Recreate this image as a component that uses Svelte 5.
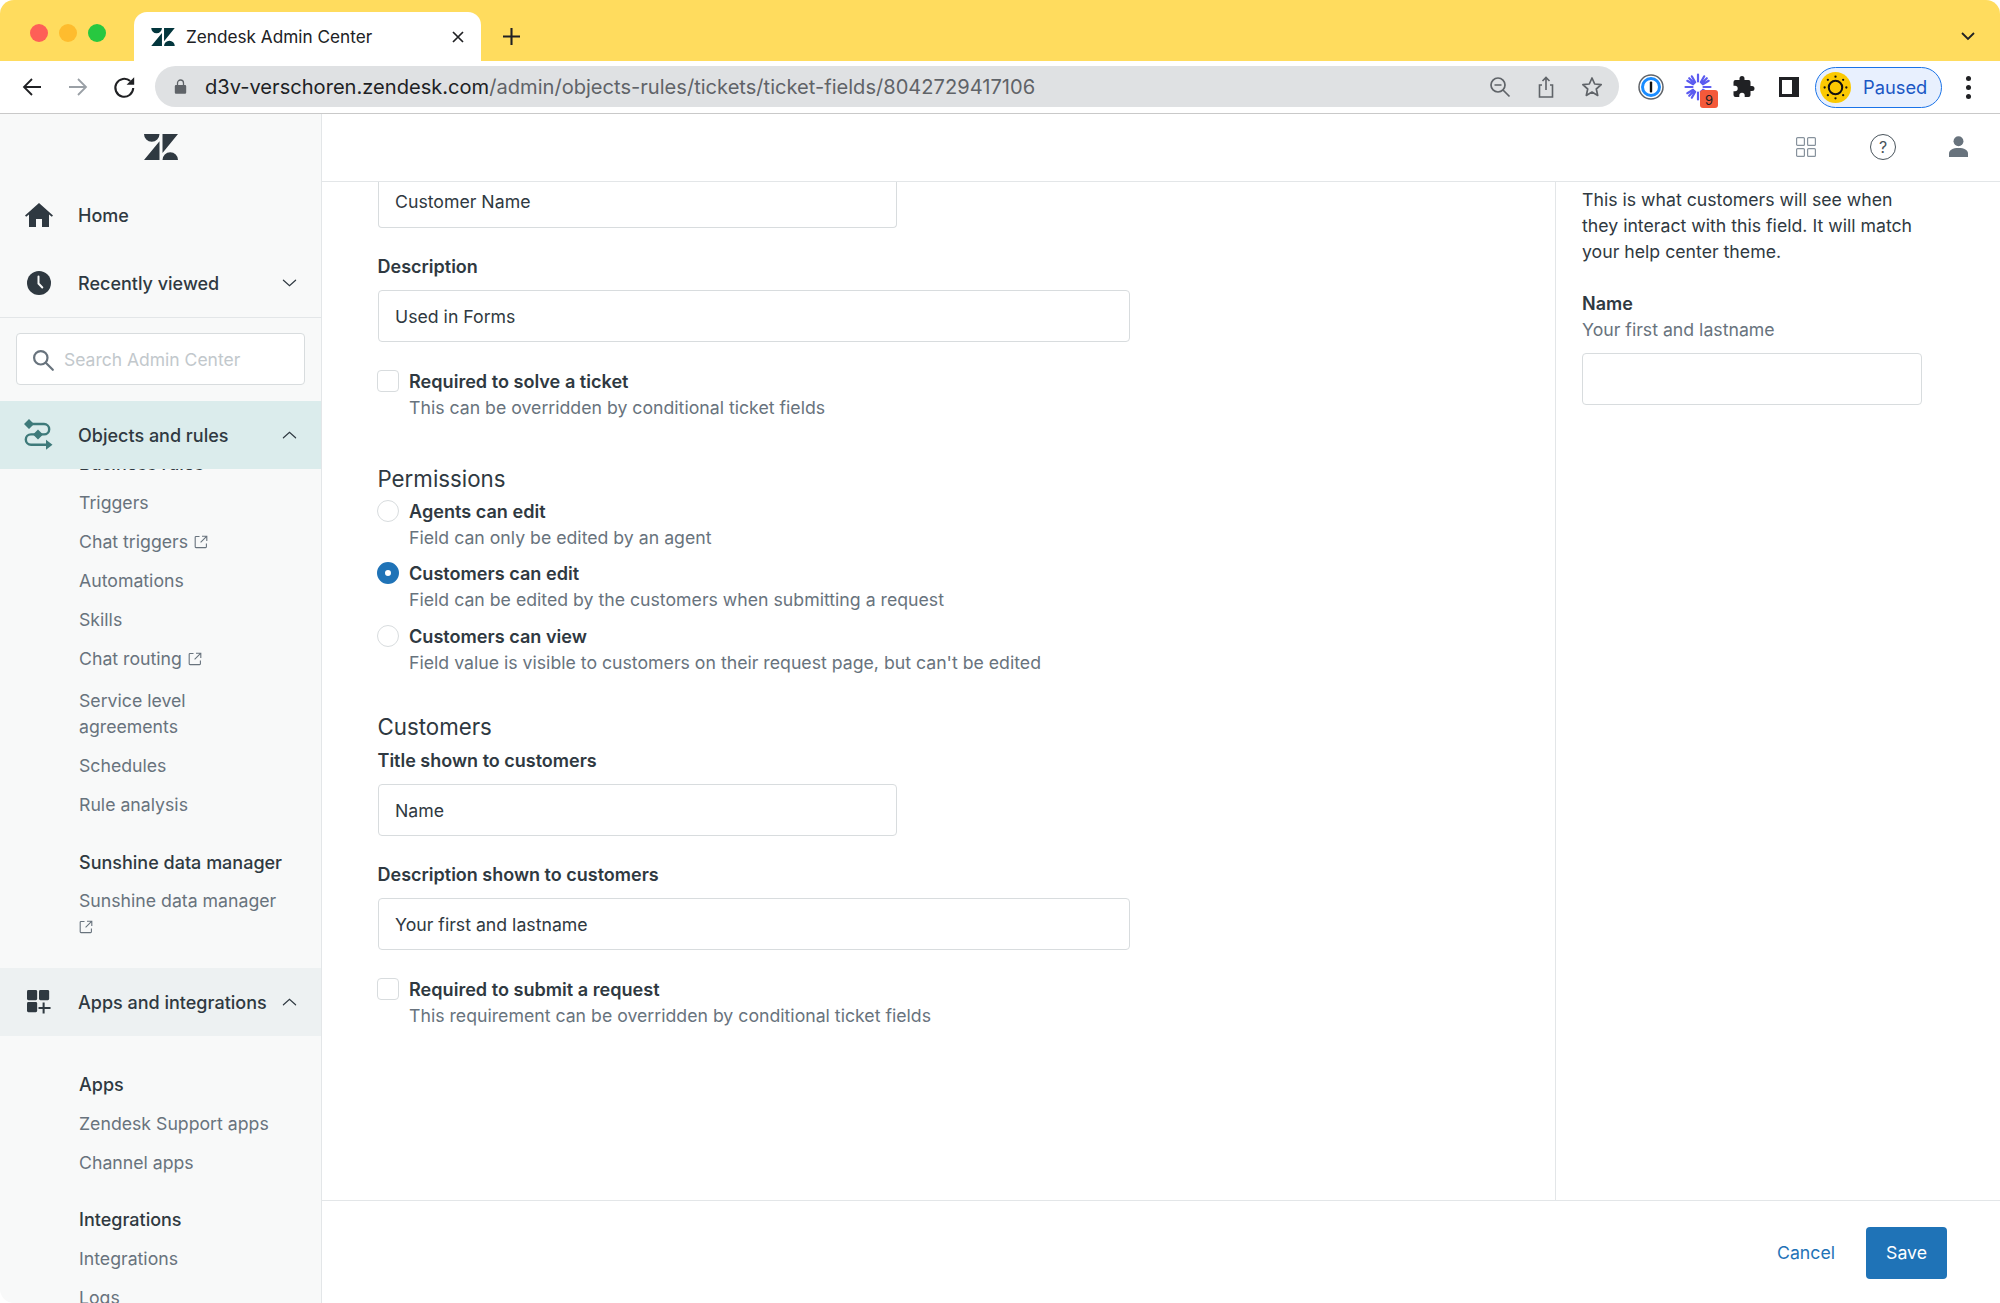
<script>
	const rulesItems = [
		{ label: 'Triggers' },
		{ label: 'Chat triggers', ext: true },
		{ label: 'Automations' },
		{ label: 'Skills' },
		{ label: 'Chat routing', ext: true },
		{ label: 'Service level agreements', narrow: true },
		{ label: 'Schedules' },
		{ label: 'Rule analysis' }
	];

	const permissions = [
		{ title: 'Agents can edit', hint: 'Field can only be edited by an agent', on: false },
		{ title: 'Customers can edit', hint: 'Field can be edited by the customers when submitting a request', on: true },
		{ title: 'Customers can view', hint: "Field value is visible to customers on their request page, but can't be edited", on: false }
	];
</script>

{#snippet zendeskMark()}
	<path d="M15.5 7.2V26H0zM15.5 0A7.75 7.75 0 0 1 0 0zM18.5 26a7.75 7.75 0 0 1 15.5 0zM18.5 19V0H34z" />
{/snippet}

{#snippet extIcon()}
	<svg class="ext" viewBox="0 0 14 14" fill="none" stroke="currentColor" stroke-width="1.1">
		<path d="M5.5 1.5H2A.8.8 0 0 0 1.2 2.3v9.5a.8.8 0 0 0 .8.8h9.6a.8.8 0 0 0 .8-.8V8.5M8 1.2h4.8V6M12.6 1.4 6.6 7.4" />
	</svg>
{/snippet}

{#snippet chevron(up)}
	<svg class="chev" viewBox="0 0 16 10" fill="none" stroke="#2f3941" stroke-width="1.3" stroke-linecap="round">
		<path d={up ? 'M1.5 8 8 2.2 14.5 8' : 'M1.5 2 8 7.8 14.5 2'} />
	</svg>
{/snippet}

<div class="window">
	<header class="tabstrip">
		<div class="lights">
			<span class="light red"></span>
			<span class="light amber"></span>
			<span class="light green"></span>
		</div>
		<div class="tab">
			<svg class="tab-logo" viewBox="0 0 34 26" fill="#03363d">{@render zendeskMark()}</svg>
			<span class="tab-title">Zendesk Admin Center</span>
			<svg class="tab-close" viewBox="0 0 12 12" stroke="#202124" stroke-width="1.7"><path d="M1 1l10 10M11 1 1 11" /></svg>
		</div>
		<svg class="tab-new" viewBox="0 0 18 18" stroke="#202124" stroke-width="2.2"><path d="M9 0v18M0 9h18" /></svg>
		<svg class="tab-list" viewBox="0 0 14 9" fill="none" stroke="#202124" stroke-width="1.8"><path d="M1 1l6 6 6-6" /></svg>
	</header>

	<div class="toolbar">
		<svg class="nav-ico" viewBox="0 0 20 20" fill="none" stroke="#202124" stroke-width="1.8"><path d="M19 10H2M10 2 2 10l8 8" /></svg>
		<svg class="nav-ico" viewBox="0 0 20 20" fill="none" stroke="#9aa0a6" stroke-width="1.8"><path d="M1 10h17M10 2l8 8-8 8" /></svg>
		<svg class="nav-ico reload" viewBox="0 0 20 20" fill="none" stroke="#202124" stroke-width="1.8"><path d="M17.6 10.5A7.8 7.8 0 1 1 15 4.4" /><path d="M18.4 1v6.6h-6.6z" fill="#202124" stroke="none" /></svg>
		<div class="omnibox">
			<svg class="lock" viewBox="0 0 12 15" fill="#5f6368"><path d="M1.5 6h9a1.2 1.2 0 0 1 1.2 1.2v6.3a1.2 1.2 0 0 1-1.2 1.2h-9a1.2 1.2 0 0 1-1.2-1.2V7.2A1.2 1.2 0 0 1 1.5 6z" /><path d="M3 6.5V4a3 3 0 0 1 6 0v2.5" fill="none" stroke="#5f6368" stroke-width="1.3" /></svg>
			<span class="url"><span class="host">d3v-verschoren.zendesk.com</span>/admin/objects-rules/tickets/ticket-fields/8042729417106</span>
			<svg class="omni-ico" viewBox="0 0 22 22" fill="none" stroke="#5f6368" stroke-width="1.7"><circle cx="9" cy="9" r="7" /><path d="M14 14l6.5 6.5M5.5 9h7" /></svg>
			<svg class="omni-ico" viewBox="0 0 22 22" fill="none" stroke="#5f6368" stroke-width="1.6"><path d="M7 9H4.500v12h13V9H15M11 14V2M7.500 5 11 1.500 14.500 5" /></svg>
			<svg class="omni-ico" viewBox="0 0 22 22" fill="none" stroke="#5f6368" stroke-width="1.7" stroke-linejoin="round"><path d="m11 2 2.700 6 6.500.7-4.900 4.300 1.400 6.400L11 16.100 5.300 19.400l1.400-6.400L1.800 8.700 8.300 8z" /></svg>
		</div>
		<div class="extensions">
			<svg class="ext-op" viewBox="0 0 26 26"><circle cx="13" cy="13" r="12" fill="#fff" stroke="#5f6368" stroke-width="1.5" /><circle cx="13" cy="13" r="8.5" fill="none" stroke="#1a8cff" stroke-width="3" /><rect x="11.8" y="7.5" width="2.4" height="11" rx="1" fill="#111" /></svg>
			<div class="ext-linear">
				<svg viewBox="0 0 28 28" stroke="#5b5bf0" stroke-width="2.2" stroke-linecap="round">
					<path d="M14 1.500v7M14 19.500v7M1.500 14h7M19.500 14h7M5.200 5.200l5 5M17.800 17.800l5 5M22.800 5.200l-5 5M10.200 17.800l-5 5M7.800 3.300l3.400 5.900M16.800 18.800l3.400 5.900M3.300 20.200l5.900-3.400M18.800 11.200l5.900-3.400M20.200 3.300l-3.400 5.900M11.200 18.800l-3.400 5.900M3.300 7.800l5.900 3.400M18.800 16.800l5.900 3.400" />
				</svg>
				<span class="ext-badge">9</span>
			</div>
			<svg class="ext-puzzle" viewBox="0 0 24 24" fill="#202124"><path d="M20 11h-1.500V7a2 2 0 0 0-2-2h-4V3.500a2.500 2.500 0 0 0-5 0V5H3.500a2 2 0 0 0-2 2v3.800H3a2.700 2.700 0 0 1 0 5.400H1.500V20a2 2 0 0 0 2 2h3.800v-1.500a2.700 2.700 0 0 1 5.400 0V22h3.800a2 2 0 0 0 2-2v-4H20a2.500 2.500 0 0 0 0-5z" /></svg>
			<svg class="ext-side" viewBox="0 0 20 20"><path d="M0 0h20v20H0z" fill="#202124" /><path d="M3 3h10v14H3z" fill="#fff" /></svg>
		</div>
		<div class="profile">
			<svg class="avatar" viewBox="0 0 30 30">
				<circle cx="15" cy="15" r="15" fill="#fbc902" />
				<circle cx="15" cy="15" r="6.5" fill="none" stroke="#111" stroke-width="2" />
				<g fill="#111"><circle cx="15" cy="4.5" r="1.1" /><circle cx="15" cy="25.5" r="1.1" /><circle cx="4.5" cy="15" r="1.1" /><circle cx="25.5" cy="15" r="1.1" /><circle cx="7.6" cy="7.6" r="1.1" /><circle cx="22.4" cy="7.6" r="1.1" /><circle cx="7.6" cy="22.4" r="1.1" /><circle cx="22.4" cy="22.4" r="1.1" /></g>
			</svg>
			<span>Paused</span>
		</div>
		<div class="kebab"><i></i><i></i><i></i></div>
	</div>

	<div class="app">
		<aside class="sidebar">
			<div class="brand">
				<svg viewBox="0 0 34 26" fill="#2f3941">{@render zendeskMark()}</svg>
			</div>
			<div class="nav-row">
				<svg class="nav-glyph" viewBox="0 0 28 24" fill="#2f3941"><path d="M14 0 0 12.500l1.200 1.300L4 11.400V24h7v-8h6v8h7V11.400l2.800 2.400 1.200-1.300z" /></svg>
				<span>Home</span>
			</div>
			<div class="nav-row">
				<svg class="nav-glyph" viewBox="0 0 24 24"><circle cx="12" cy="12" r="12" fill="#2f3941" /><path d="M11.500 5.500v7l3.800 4" fill="none" stroke="#f8f9f9" stroke-width="2" stroke-linecap="round" /></svg>
				<span>Recently viewed</span>
				{@render chevron(false)}
			</div>
			<div class="search">
				<div class="search-box">
					<svg viewBox="0 0 22 22" fill="none" stroke="#68737d" stroke-width="2.2"><circle cx="8.8" cy="8.8" r="6.7" /><path d="m13.800 13.800 7 7" stroke-linecap="round" /></svg>
					<span>Search Admin Center</span>
				</div>
			</div>
			<div class="nav-row band active">
				<svg class="nav-glyph wide" viewBox="0 0 30 32" fill="none" stroke="#3e7a7a" stroke-width="2.4">
					<path d="M6 5H21a5.200 5.200 0 0 1 0 10.400H8a5.200 5.200 0 0 0 0 10.400H25" />
					<path d="m6 0 5 5-5 5-5-5zM15 10.400l5 5-5 5-5-5zM23 20.800l6.500 5-6.500 5z" fill="#3e7a7a" stroke="none" />
				</svg>
				<span>Objects and rules</span>
				{@render chevron(true)}
			</div>
			<div class="subnav-clip">
				<div class="subnav rules">
					<div class="sub-title">Business rules</div>
					{#each rulesItems as item}
						<div class="sub-item" class:narrow={item.narrow}>
							{item.label}{#if item.ext}{@render extIcon()}{/if}
						</div>
					{/each}
					<div class="sub-title spaced">Sunshine data manager</div>
					<div class="sub-item wrapped">Sunshine data manager {@render extIcon()}</div>
				</div>
			</div>
			<div class="nav-row band muted">
				<svg class="nav-glyph" viewBox="0 0 26 26" fill="#2f3941">
					<rect x="0" y="0" width="11" height="11" rx="1.5" /><rect x="13" y="0" width="11" height="11" rx="1.5" /><rect x="0" y="13" width="11" height="11" rx="1.5" />
					<path d="M18 13.500v12M12.500 19.500h13" stroke="#2f3941" stroke-width="2.2" />
				</svg>
				<span>Apps and integrations</span>
				{@render chevron(true)}
			</div>
			<div class="subnav apps">
				<div class="sub-title">Apps</div>
				<div class="sub-item">Zendesk Support apps</div>
				<div class="sub-item">Channel apps</div>
				<div class="sub-title spaced">Integrations</div>
				<div class="sub-item">Integrations</div>
				<div class="sub-item">Logs</div>
			</div>
		</aside>

		<div class="main">
			<div class="topbar">
				<svg class="top-grid" viewBox="0 0 20 20" fill="none" stroke="#87929d" stroke-width="1.2">
					<rect x=".6" y=".6" width="7.8" height="7.8" rx="1" /><rect x="11.6" y=".6" width="7.8" height="7.8" rx="1" /><rect x=".6" y="11.6" width="7.8" height="7.8" rx="1" /><rect x="11.6" y="11.6" width="7.8" height="7.8" rx="1" />
				</svg>
				<div class="top-help">?</div>
				<svg class="top-user" viewBox="0 0 20 22" fill="#68737d"><circle cx="10" cy="5.500" r="5.200" /><path d="M0 22v-3.500C0 14.500 4 12.500 10 12.500s10 2 10 6V22z" /></svg>
			</div>

			<div class="body">
				<form class="form">
					<div class="input short clipped">Customer Name</div>

					<div class="label">Description</div>
					<div class="input">Used in Forms</div>

					<div class="choice check-row">
						<span class="box"></span>
						<div>
							<div class="choice-title">Required to solve a ticket</div>
							<div class="choice-hint">This can be overridden by conditional ticket fields</div>
						</div>
					</div>

					<h2>Permissions</h2>
					{#each permissions as p}
						<div class="choice radio-row">
							<span class="radio" class:on={p.on}></span>
							<div>
								<div class="choice-title">{p.title}</div>
								<div class="choice-hint">{p.hint}</div>
							</div>
						</div>
					{/each}

					<h2 class="customers">Customers</h2>
					<div class="label tight">Title shown to customers</div>
					<div class="input short">Name</div>

					<div class="label">Description shown to customers</div>
					<div class="input">Your first and lastname</div>

					<div class="choice check-row">
						<span class="box"></span>
						<div>
							<div class="choice-title">Required to submit a request</div>
							<div class="choice-hint">This requirement can be overridden by conditional ticket fields</div>
						</div>
					</div>
				</form>

				<section class="preview">
					<p>This is what customers will see when they interact with this field. It will match your help center theme.</p>
					<div class="preview-name">Name</div>
					<div class="preview-hint">Your first and lastname</div>
					<div class="input preview-input"></div>
				</section>
			</div>

			<footer class="footer">
				<span class="cancel">Cancel</span>
				<span class="save">Save</span>
			</footer>
		</div>
	</div>
</div>

<style>
	:global(body) {
		margin: 0;
		background: #fff;
	}

	.window {
		width: 2000px;
		height: 1303px;
		display: flex;
		flex-direction: column;
		overflow: hidden;
		border-radius: 14px;
		font-family: Inter, 'Liberation Sans', sans-serif;
		font-size: 17.7px;
		line-height: 26px;
		color: #2f3941;
	}

	.tabstrip {
		height: 61px;
		flex: none;
		box-sizing: border-box;
		padding: 12px 21px 0 30px;
		background: #ffdc5e;
		display: flex;
		align-items: flex-start;
	}

	.lights {
		display: flex;
		gap: 11px;
		padding-top: 12px;
		margin-right: 28px;
	}

	.light {
		width: 18px;
		height: 18px;
		border-radius: 50%;
	}

	.red { background: #fe5f57; }
	.amber { background: #febc2e; }
	.green { background: #27c840; }

	.tab {
		width: 347px;
		height: 49px;
		box-sizing: border-box;
		padding: 0 17px;
		background: #fff;
		border-radius: 13px 13px 0 0;
		display: flex;
		align-items: center;
		color: #202124;
	}

	.tab-logo {
		width: 24px;
		height: 18px;
		margin-right: 11px;
	}

	.tab-title {
		flex: 1;
		font-size: 17.2px;
	}

	.tab-close {
		width: 12px;
		height: 12px;
	}

	.tab-new {
		width: 17px;
		height: 17px;
		margin: 16px 0 0 22px;
	}

	.tab-list {
		width: 14px;
		height: 9px;
		margin: 20px 4px 0 auto;
	}

	.toolbar {
		height: 53px;
		flex: none;
		box-sizing: border-box;
		background: #fff;
		border-bottom: 1px solid #c9c9c9;
		padding-left: 22px;
		display: flex;
		align-items: center;
	}

	.nav-ico {
		width: 20px;
		height: 20px;
		margin-right: 26px;
	}

	.nav-ico.reload {
		width: 23px;
		height: 23px;
		margin: 0 23px 0 -1px;
	}

	.omnibox {
		width: 1464px;
		height: 41px;
		margin: -1px 0 0 -4px;
		box-sizing: border-box;
		padding: 0 16px 0 19px;
		background: #dfe1e3;
		border-radius: 21px;
		display: flex;
		align-items: center;
		font-size: 20.1px;
		color: #5f6368;
	}

	.lock {
		width: 13px;
		height: 15px;
		margin-right: 18px;
	}

	.url {
		flex: 1;
		white-space: nowrap;
	}

	.host {
		color: #202124;
	}

	.omni-ico {
		width: 22px;
		height: 22px;
		margin-left: 24px;
	}

	.extensions {
		display: flex;
		align-items: center;
		margin-left: 19px;
	}

	.ext-op {
		width: 26px;
		height: 26px;
	}

	.ext-linear {
		position: relative;
		width: 28px;
		height: 28px;
		margin-left: 20px;
	}

	.ext-linear svg {
		width: 28px;
		height: 28px;
	}

	.ext-badge {
		position: absolute;
		left: 16px;
		top: 17px;
		width: 18px;
		height: 18px;
		background: #f4593a;
		border-radius: 3px;
		color: #202124;
		font-size: 13px;
		line-height: 20px;
		text-align: center;
	}

	.ext-puzzle {
		width: 24px;
		height: 24px;
		margin-left: 20px;
	}

	.ext-side {
		width: 20px;
		height: 20px;
		margin-left: 23px;
	}

	.profile {
		width: 127px;
		height: 41px;
		margin-left: 16px;
		box-sizing: border-box;
		border: 1.5px solid #1a73e8;
		border-radius: 21px;
		background: #e8f0fe;
		display: flex;
		align-items: center;
		padding-left: 4px;
		color: #1a57c4;
		font-size: 18.3px;
	}

	.avatar {
		width: 31px;
		height: 31px;
		margin-right: 12px;
	}

	.kebab {
		margin-left: 24px;
		display: flex;
		flex-direction: column;
		gap: 4px;
	}

	.kebab i {
		width: 5px;
		height: 5px;
		border-radius: 50%;
		background: #202124;
	}

	.app {
		flex: 1;
		min-height: 0;
		display: flex;
	}

	.sidebar {
		width: 322px;
		flex: none;
		box-sizing: border-box;
		background: #f8f9f9;
		border-right: 1px solid #e3e6e8;
		overflow: hidden;
	}

	.brand {
		height: 67px;
		display: flex;
		justify-content: center;
		padding-top: 20px;
		box-sizing: border-box;
	}

	.brand svg {
		width: 34px;
		height: 26px;
	}

	.nav-row {
		height: 68px;
		box-sizing: border-box;
		padding: 0 23px 0 25px;
		display: flex;
		align-items: center;
		font-size: 18px;
		font-weight: 500;
	}

	.nav-row span {
		flex: 1;
		padding-top: 1px;
		white-space: nowrap;
	}

	.nav-glyph {
		width: 28px;
		height: 24px;
		margin-right: 25px;
		flex: none;
	}

	.nav-glyph.wide {
		width: 30px;
		height: 32px;
		margin: 0 25px 0 -2px;
	}

	.chev {
		width: 15px;
		height: 10px;
		flex: none;
		margin-right: 1px;
	}

	.search {
		padding: 15px 16px 16px;
		border-top: 1px solid #e3e6e8;
	}

	.search-box {
		height: 52px;
		box-sizing: border-box;
		padding: 1px 0 0 15px;
		background: #fff;
		border: 1px solid #d8dcde;
		border-radius: 4px;
		display: flex;
		align-items: center;
		color: #c2c8cc;
		font-size: 17.5px;
	}

	.search svg {
		width: 22px;
		height: 22px;
		margin-right: 10px;
	}

	.band.active {
		background: #dbecec;
	}

	.band.muted {
		background: #edf1f2;
	}

	.subnav-clip {
		height: 499px;
		overflow: hidden;
	}

	.rules {
		margin-top: -18px;
	}

	.apps {
		padding-top: 36px;
	}

	.subnav {
		padding-left: 79px;
		padding-right: 26px;
	}

	.sub-title {
		font-size: 18px;
		font-weight: 500;
		height: 26px;
		margin-bottom: 6px;
		white-space: nowrap;
	}

	.sub-title.spaced {
		margin-top: 25px;
	}

	.sub-item {
		padding: 6.6px 0;
		color: #68737d;
	}

	.sub-item.narrow {
		width: 140px;
		margin-top: 2px;
	}

	.ext {
		width: 14px;
		height: 14px;
		margin-left: 6px;
		vertical-align: -1px;
	}

	.wrapped .ext {
		margin-left: 0;
	}

	.main {
		flex: 1;
		min-width: 0;
		display: flex;
		flex-direction: column;
	}

	.topbar {
		height: 68px;
		flex: none;
		box-sizing: border-box;
		border-bottom: 1px solid #e3e6e8;
		display: flex;
		align-items: center;
		justify-content: flex-end;
		padding-right: 32px;
	}

	.top-grid {
		width: 20px;
		height: 20px;
		margin-top: -2px;
	}

	.top-help {
		width: 24px;
		height: 24px;
		margin: -2px 0 0 54px;
		border: 1.2px solid #49545c;
		border-radius: 50%;
		text-align: center;
		font-size: 16px;
		line-height: 24px;
		color: #49545c;
	}

	.top-user {
		width: 19px;
		height: 21px;
		margin: -2px 0 0 53px;
	}

	.body {
		flex: 1;
		min-height: 0;
		display: flex;
	}

	.form {
		flex: 1;
		padding-left: 55.5px;
	}

	.input {
		width: 752.5px;
		height: 52px;
		box-sizing: border-box;
		padding: 0 16.5px;
		background: #fff;
		border: 1px solid #d8dcde;
		border-radius: 4px;
		line-height: 52px;
		color: #2f3941;
	}

	.input.short {
		width: 519.5px;
	}

	.input.clipped {
		height: 46px;
		line-height: 40px;
		border-top: 0;
		border-radius: 0 0 4px 4px;
	}

	.label {
		font-size: 18px;
		font-weight: 600;
		margin: 26px 0 10px;
	}

	.label.tight {
		margin-top: 6px;
	}

	.choice {
		display: flex;
		gap: 10px;
		margin-left: -0.5px;
	}

	.check-row {
		margin-top: 26px;
	}

	.radio-row {
		margin-bottom: 9.5px;
	}

	.box,
	.radio {
		width: 22px;
		height: 22px;
		flex: none;
		box-sizing: border-box;
		background: #fff;
		border: 1px solid #d8dcde;
		margin-top: 2px;
	}

	.box {
		border-radius: 4px;
	}

	.radio {
		border-radius: 50%;
	}

	.radio.on {
		border: 8px solid #1f73b7;
	}

	.choice-title {
		font-size: 18.1px;
		font-weight: 600;
		line-height: 27px;
	}

	.choice-hint {
		color: #68737d;
	}

	h2 {
		font-size: 22.3px;
		font-weight: 400;
		line-height: 30px;
		margin: 43px 0 3.5px;
	}

	h2.customers {
		margin-top: 36px;
	}

	.preview {
		width: 445px;
		flex: none;
		box-sizing: border-box;
		border-left: 1px solid #e3e6e8;
		padding: 5px 30px 0 26px;
	}

	.preview p {
		margin: 0;
		width: 340px;
	}

	.preview-name {
		font-size: 18px;
		font-weight: 600;
		margin-top: 26px;
	}

	.preview-hint {
		color: #68737d;
		margin-bottom: 10px;
	}

	.preview-input {
		width: 340px;
	}

	.footer {
		height: 103px;
		flex: none;
		box-sizing: border-box;
		padding: 1px 53px 0 0;
		border-top: 1px solid #e3e6e8;
		display: flex;
		align-items: center;
		justify-content: flex-end;
	}

	.cancel {
		color: #1f73b7;
		margin-right: 31px;
	}

	.save {
		width: 81px;
		height: 52px;
		border-radius: 4px;
		background: #1f73b7;
		color: #fff;
		text-align: center;
		line-height: 52px;
	}
</style>
